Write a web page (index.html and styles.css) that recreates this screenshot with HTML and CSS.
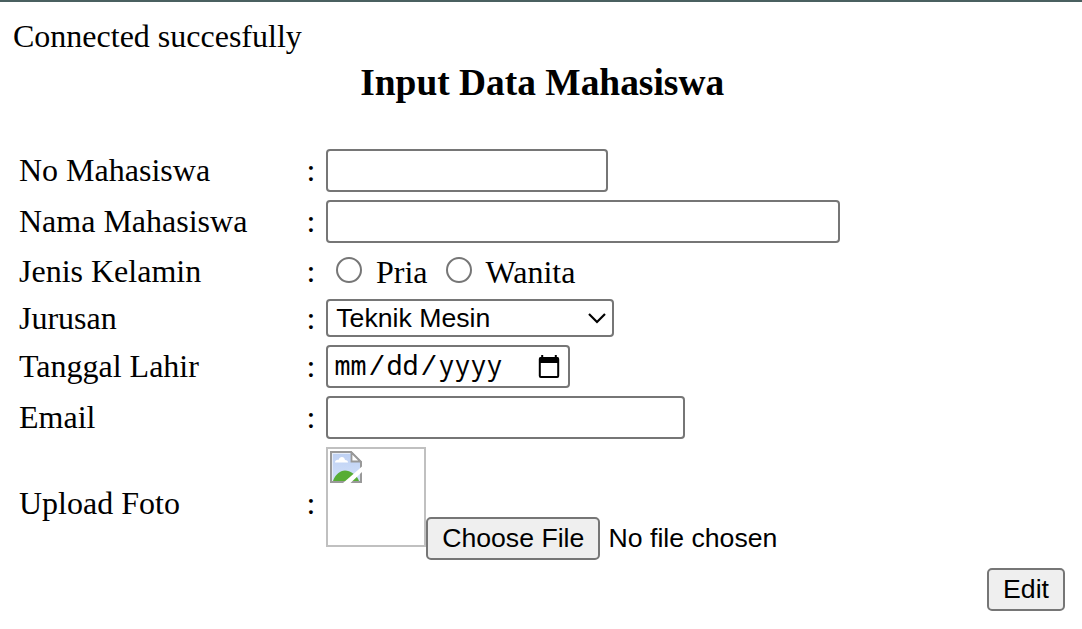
FILE: index.html
```html
<!DOCTYPE html>
<html lang="id">
<head>
<meta charset="utf-8">
<title>Input Data Mahasiswa</title>
<link rel="stylesheet" href="styles.css">
</head>
<body>
<p class="status">Connected succesfully</p>
<h1 class="title">Input Data Mahasiswa</h1>
<form class="form">
  <label class="label">No Mahasiswa</label><span class="colon">:</span>
  <div class="cell"><input class="field field-number" type="text"></div>

  <label class="label">Nama Mahasiswa</label><span class="colon">:</span>
  <div class="cell"><input class="field field-name" type="text"></div>

  <span class="label">Jenis Kelamin</span><span class="colon">:</span>
  <div class="cell radios">
    <input class="radio" type="radio" name="jk"><span class="option option-first">Pria</span>
    <input class="radio" type="radio" name="jk"><span class="option">Wanita</span>
  </div>

  <span class="label">Jurusan</span><span class="colon">:</span>
  <div class="cell"><div class="select"><span>Teknik Mesin</span>
    <svg class="chevron" width="20" height="12" viewBox="0 0 20 12"><path d="M2 2l8 8 8-8" fill="none" stroke="#000" stroke-width="2.2"/></svg></div></div>

  <span class="label">Tanggal Lahir</span><span class="colon">:</span>
  <div class="cell"><div class="date"><div class="date-text"><span class="part">mm</span><span class="slash">/</span><span class="part">dd</span><span class="slash">/</span><span class="part">yyyy</span></div>
    <svg class="calendar" width="22" height="24" viewBox="0 0 22 24"><path fill="#000" fill-rule="evenodd" d="M3.200 1h2v2h11.600V1h2v2a2 2 0 0 1 2.400 2v17a2 2 0 0 1-2 2H2.800a2 2 0 0 1-2-2V5a2 2 0 0 1 2.400-2zM2.800 9v13h16.400V9z"/></svg></div></div>

  <label class="label">Email</label><span class="colon">:</span>
  <div class="cell"><input class="field field-email" type="text"></div>

  <span class="label">Upload Foto</span><span class="colon">:</span>
  <div class="cell upload">
    <div class="photo">
      <svg width="32" height="32" viewBox="0 0 32 32">
        <defs><linearGradient id="sky" x1="0" y1="0" x2="0" y2="1"><stop offset="0" stop-color="#bdd0f3"/><stop offset="1" stop-color="#d3e1fa"/></linearGradient></defs>
        <path d="M1 1h20l10 10v20H1z" fill="url(#sky)" stroke="#999" stroke-width="2"/>
        <path d="M2.500 2.500h18" stroke="#e6edfa" fill="none"/>
        <path d="M2.500 2v28" stroke="#e6edfa" fill="none"/>
        <path d="M5 11.500c0-2 2-3 3.500-2.500 1-4 6-4 6.500 0 2 0 3 1 3 2.500z" fill="#fff"/>
        <path d="M3 30c2-6 7-10.500 12-10.500S27 24 29 30z" fill="#57ad35"/>
        <path d="M21.500 1.500v9h9z" fill="#fff" stroke="#999" stroke-width="1.800"/>
        <path d="M32 15.500V21L20.500 32H13z" fill="#fff"/>
      </svg>
    </div>
    <button class="button choose" type="button">Choose File</button>
    <span class="filename">No file chosen</span>
  </div>

  <div class="actions"><button class="button edit" type="button">Edit</button></div>
</form>
</body>
</html>
```
FILE: styles.css
```css
* { box-sizing: border-box; }
body {
  margin: 0;
  height: 629px;
  overflow: hidden;
  border-top: 2px solid #4a6060;
  background: #fff;
  color: #000;
  font: 32px/37px "Liberation Serif", serif;
}
.status { margin: 0; padding: 16px 13px 0; }
.title { margin: 7px 0 0; padding-left: 2.4px; font-size: 37.44px; line-height: 42px; text-align: center; }
.form {
  display: grid;
  grid-template-columns: 287px 20px 1fr;
  grid-template-rows: 43px 43px 40px 38px 43px 43px 113px 43px;
  row-gap: 8px;
  align-items: center;
  padding: 45px 17px 0 19px;
}
.colon { padding-left: 0.6px; }
.cell { display: flex; align-items: center; }
.field, .select, .date, .button, .filename {
  font: 26.667px/30px "Liberation Sans", Arial, sans-serif;
  color: #000;
}
.field, .select, .date {
  height: 43px;
  border: 2px solid #767676;
  border-radius: 4px;
  background: #fff;
  padding: 0 6px;
  outline: 0;
}
.field-number { width: 282px; }
.field-name { width: 514px; }
.field-email { width: 359px; }
.radio {
  appearance: none;
  width: 26px;
  height: 26px;
  margin: 0 0 3px 10px;
  border: 2px solid #767676;
  border-radius: 50%;
}
.option { padding: 2px 9px 0 14px; }
.option-first { padding-right: 8px; }
.select { display: flex; justify-content: space-between; align-items: center; width: 288px; height: 38px; padding: 0 5px 0 8.3px; }
.date { display: flex; align-items: center; width: 244px; font-family: "Noto Sans Mono", "DejaVu Sans Mono", monospace; padding: 0 8.5px 0 4.6px; }
.date-text { display: flex; align-items: baseline; }
.part { padding: 0 2px; }
.slash { font-family: "Liberation Mono", monospace; font-size: 28px; width: 16px; }
.calendar { margin-left: auto; margin-bottom: 1px; }
.upload { align-items: flex-end; height: 113px; }
.photo { width: 100px; height: 100px; margin-bottom: 13px; padding: 2px; border: 2px solid #c0c0c0; line-height: 0; }
.button { height: 43px; padding: 0 0 2px; border: 2px solid #767676; border-radius: 5px; background: #efefef; }
.choose { width: 174px; padding-left: 0.5px; }
.filename { padding: 0 0 7px 8.5px; }
.actions { grid-column: 1 / -1; text-align: right; line-height: 0; }
.edit { width: 78px; }
```
